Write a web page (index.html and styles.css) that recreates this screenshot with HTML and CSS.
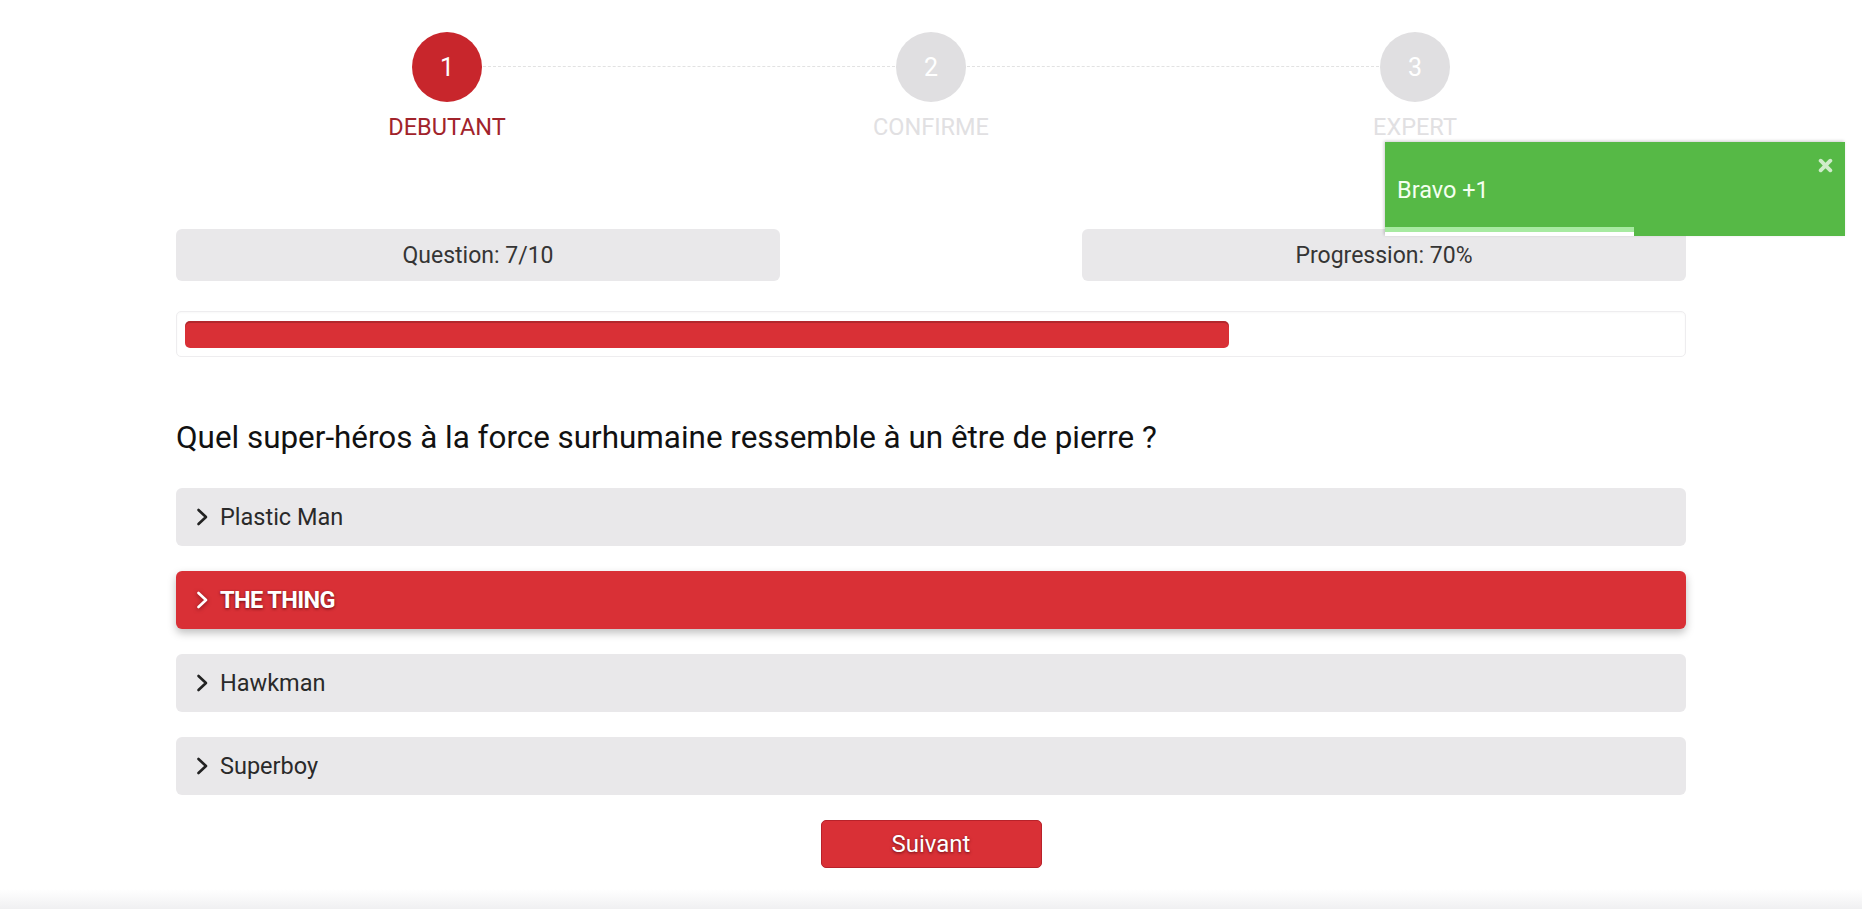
FILE: index.html
```html
<!DOCTYPE html>
<html lang="fr">
<head>
<meta charset="utf-8">
<title>Quiz</title>
<link rel="stylesheet" href="styles.css">
</head>
<body>
<div class="page">
  <div class="stepper">
    <div class="step active">
      <div class="circle">1</div>
      <div class="label">DEBUTANT</div>
    </div>
    <div class="step">
      <div class="circle">2</div>
      <div class="label">CONFIRME</div>
    </div>
    <div class="step">
      <div class="circle">3</div>
      <div class="label">EXPERT</div>
    </div>
  </div>

  <div class="container">
    <div class="stats">
      <div class="stat">Question: 7/10</div>
      <div class="stat">Progression: 70%</div>
    </div>
    <div class="progress">
      <div class="progress-bar" style="width:70%"></div>
    </div>
    <h2 class="question">Quel super-héros à la force surhumaine ressemble à un être de pierre ?</h2>
    <div class="answers">
      <div class="answer"><svg class="chev" viewBox="0 0 12 18" width="12" height="18"><path d="M2.5 2 L10 9 L2.5 16" fill="none" stroke="currentColor" stroke-width="2.6" stroke-linecap="round" stroke-linejoin="round"/></svg>Plastic Man</div>
      <div class="answer selected"><svg class="chev" viewBox="0 0 12 18" width="12" height="18"><path d="M2.5 2 L10 9 L2.5 16" fill="none" stroke="currentColor" stroke-width="2.6" stroke-linecap="round" stroke-linejoin="round"/></svg>THE THING</div>
      <div class="answer"><svg class="chev" viewBox="0 0 12 18" width="12" height="18"><path d="M2.5 2 L10 9 L2.5 16" fill="none" stroke="currentColor" stroke-width="2.6" stroke-linecap="round" stroke-linejoin="round"/></svg>Hawkman</div>
      <div class="answer"><svg class="chev" viewBox="0 0 12 18" width="12" height="18"><path d="M2.5 2 L10 9 L2.5 16" fill="none" stroke="currentColor" stroke-width="2.6" stroke-linecap="round" stroke-linejoin="round"/></svg>Superboy</div>
    </div>
    <div class="actions">
      <button class="btn">Suivant</button>
    </div>
  </div>

  <div class="toast">
    <span class="toast-text">Bravo +1</span>
    <svg class="toast-close" viewBox="0 0 14 14" width="15" height="15"><path d="M2.5 2.5 L11.5 11.5 M11.5 2.5 L2.5 11.5" stroke="currentColor" stroke-width="3.6" stroke-linecap="round"/></svg>
    <div class="toast-progress"></div>
  </div>
  <div class="bottom-fade"></div>
</div>
</body>
</html>
```
FILE: styles.css
```css
html, body {
  margin: 0;
  padding: 0;
  background: #fff;
}
body {
  font-family: Roboto, "Liberation Sans", sans-serif;
  color: #333;
  height: 909px;
  overflow: hidden;
}
.page {
  position: relative;
  height: 909px;
}
.stepper {
  display: grid;
  grid-template-columns: repeat(3, 484px);
  justify-content: center;
  padding-top: 32px;
}
.step {
  position: relative;
  display: flex;
  flex-direction: column;
  align-items: center;
}
.step + .step::before {
  content: "";
  position: absolute;
  top: 34px;
  left: calc(-50% + 36px);
  width: calc(100% - 72px);
  border-top: 1px dashed #e2e2e2;
}
.circle {
  width: 70px;
  height: 70px;
  border-radius: 50%;
  background: #e0dfe1;
  color: #fff;
  font-size: 25px;
  display: flex;
  align-items: center;
  justify-content: center;
}
.step.active .circle {
  background: #c8262c;
}
.label {
  margin-top: 12px;
  font-size: 23.5px;
  line-height: 26px;
  color: #e1e0e2;
}
.step.active .label {
  color: #a1232b;
}
.container {
  width: 1510px;
  margin: 89px auto 0;
}
.stats {
  display: flex;
  justify-content: space-between;
}
.stat {
  width: 40%;
  height: 52px;
  border-radius: 6px;
  background: #e9e8ea;
  display: flex;
  align-items: center;
  justify-content: center;
  font-size: 23px;
  color: #353535;
}
.progress {
  margin-top: 30px;
  height: 27px;
  padding: 9px 8px 8px;
  border: 1px solid #eeedef;
  border-radius: 5px;
  background: #fff;
  box-shadow: inset 0 1px 2px rgba(0,0,0,0.03);
}
.progress-bar {
  height: 27px;
  border-radius: 5px;
  background: #d93036;
  box-shadow: inset 0 2px 0 rgba(0,0,0,0.18);
}
.question {
  margin: 61px 0 0;
  font-size: 31.4px;
  line-height: 40px;
  font-weight: 400;
  color: #111;
}
.answers {
  margin-top: 30px;
  display: flex;
  flex-direction: column;
  gap: 25px;
}
.answer {
  height: 58px;
  border-radius: 6px;
  background: #e9e8ea;
  display: flex;
  align-items: center;
  padding-left: 20px;
  font-size: 23.5px;
  color: #2a2a2a;
}
.chev {
  margin-right: 12px;
  color: #222;
}
.answer.selected {
  background: #d93036;
  color: #fff;
  font-weight: 700;
  letter-spacing: -0.6px;
  text-shadow: 0 1px 3px rgba(60,0,10,0.7);
  box-shadow: 0 4px 9px rgba(0,0,0,0.25);
}
.answer.selected .chev {
  color: #fff;
  filter: drop-shadow(0 1px 2px rgba(60,0,10,0.6));
}
.actions {
  margin-top: 25px;
  display: flex;
  justify-content: center;
}
.btn {
  width: 221px;
  height: 48px;
  border: 1px solid #b8222a;
  border-radius: 5px;
  background: #d93036;
  color: #fff;
  font-family: Roboto, "Liberation Sans", sans-serif;
  font-size: 24px;
  text-shadow: 0 1px 3px rgba(60,0,10,0.7);
  padding: 0;
}
.toast {
  position: absolute;
  left: 1385px;
  top: 142px;
  width: 460px;
  height: 94px;
  background: #56b946;
  box-shadow: -1px -1px 3px rgba(0,0,0,0.2);
  color: #fff;
}
.toast-text {
  position: absolute;
  left: 12px;
  top: 35px;
  font-size: 23.5px;
  line-height: 26px;
  color: #f4fff0;
}
.toast-close {
  position: absolute;
  right: 12px;
  top: 16px;
  color: rgba(255,255,255,0.72);
}
.toast-progress {
  position: absolute;
  left: 0;
  bottom: 0;
  width: 249px;
  height: 9px;
  background: linear-gradient(#a7eaa1 0, #a7eaa1 5px, #fff 5px);
}
.bottom-fade {
  position: absolute;
  left: 0;
  right: 0;
  bottom: 0;
  height: 20px;
  background: linear-gradient(rgba(240,240,242,0), rgba(238,238,240,0.9));
}
```
